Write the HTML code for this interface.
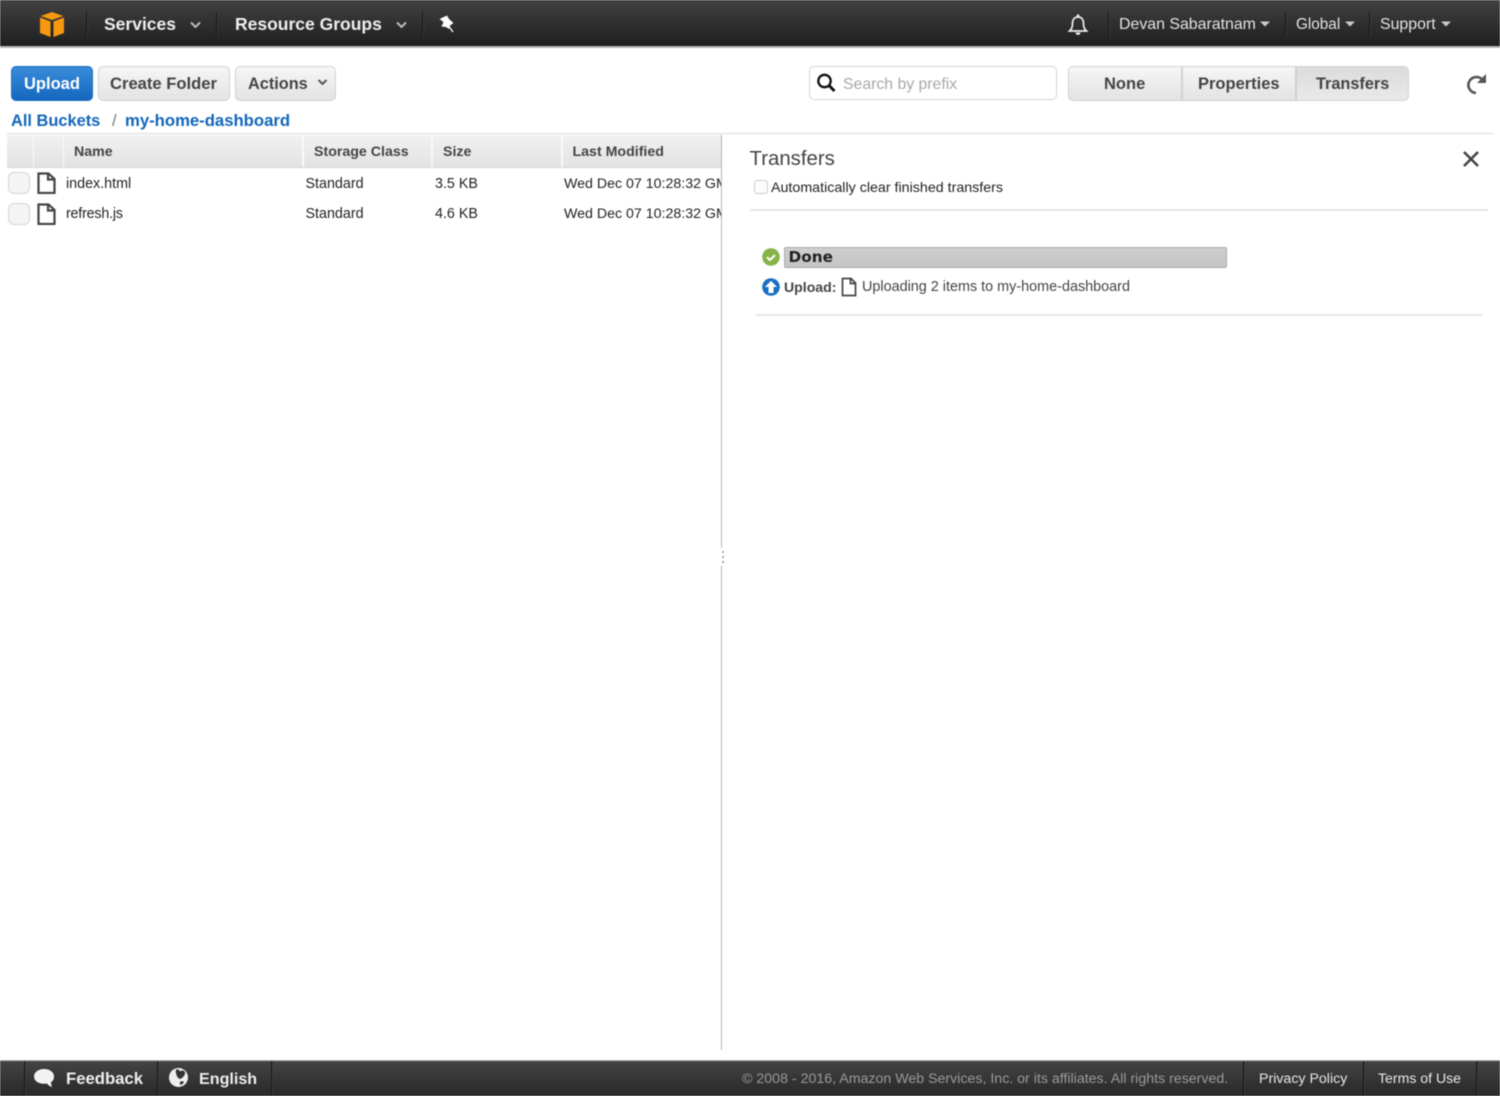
<!DOCTYPE html>
<html lang="en">
<head>
<meta charset="utf-8">
<title>S3 Bucket</title>
<style>
html,body{margin:0;padding:0;background:#fff;width:1500px;height:1096px;overflow:hidden}
#w{position:relative;width:1500px;height:1096px;overflow:hidden;font-family:"Liberation Sans",Arial,sans-serif;filter:blur(.4px)}
#w div,#w span,#w svg{position:absolute}
.t{white-space:nowrap;line-height:20px;height:20px}
.b{font-weight:bold}
.nav{left:-6px;width:1512px;background:linear-gradient(#454545,#1f1f1f)}
.sep{width:1px;background:#161616;border-right:1px solid #3c3c3c}
.btn{box-sizing:border-box;border:1px solid #d2d2d2;border-radius:5px;background:linear-gradient(#f6f6f6,#e3e3e3);height:35px;top:66px}
.c{color:#444;font-size:16.5px;font-weight:bold}
.th{top:135px;height:32px;background:linear-gradient(#f1f1f1,#e3e3e3);border-bottom:1px solid #d8d8d8;box-sizing:content-box}
.hd{color:#444;font-size:14.2px;font-weight:bold;top:142px}
.r{color:#222;font-size:14.3px}
.ck{box-sizing:border-box;left:8px;width:22px;height:22px;background:#f4f4f4;border:1px solid #d4d4d4;border-radius:6px}
.hr{background:#e6e6e6;height:2px}
.nw{color:#eee;font-size:17.5px;font-weight:bold;top:14px}
.nr{color:#e2e2e2;font-size:15.9px;top:15px}
.f{color:#e8e8e8;font-size:14.2px;top:1069px}
</style>
</head>
<body>
<div id="w">
  <!-- Top nav -->
  <div class="nav" style="top:-6px;height:52px"></div>
  <div style="left:-6px;top:46px;width:1512px;height:2px;background:#b5b5b5"></div>
  <svg style="left:38px;top:11px" width="28" height="27" viewBox="0 0 28 27">
    <path fill="#f7980f" d="M14 1l11.500 4-11.500 4L2.500 5zM2 6.500l10.500 4v15.500L2 22zM15.500 10.500l10.500-4V22l-10.500 4z"/>
  </svg>
  <div class="sep" style="left:86px;top:12px;height:24px"></div>
  <span class="t nw" style="left:104px">Services</span>
  <svg style="left:189px;top:20px" width="13" height="10" viewBox="0 0 13 10"><path d="M2 2.500l4.500 4.500 4.500-4.500" fill="none" stroke="#bbb" stroke-width="2"/></svg>
  <div class="sep" style="left:216px;top:12px;height:24px"></div>
  <span class="t nw" style="left:235px">Resource Groups</span>
  <svg style="left:395px;top:20px" width="13" height="10" viewBox="0 0 13 10"><path d="M2 2.500l4.500 4.500 4.500-4.500" fill="none" stroke="#bbb" stroke-width="2"/></svg>
  <div class="sep" style="left:422px;top:12px;height:24px"></div>
  <svg style="left:438px;top:14px" width="18" height="19" viewBox="0 0 18 19">
    <path fill="#fff" d="M1.500 5L9 1.500l2 3.500 4.500 4-3.500 2.500-1 3.500-3-2-4.500-.5L5.500 8z"/>
    <path stroke="#fff" stroke-width="1.300" d="M10.500 12l4.500 6"/>
  </svg>
  <svg style="left:1066px;top:12px" width="24" height="25" viewBox="0 0 24 25">
    <path fill="none" stroke="#eee" stroke-width="1.700" d="M3.500 19c2-2 3-3.500 3-7.500 0-4 2-6.500 5.500-6.500s5.500 2.500 5.500 6.500c0 4 1 5.500 3 7.500z"/>
    <circle cx="12" cy="3.500" r="1.300" fill="#eee"/>
    <path fill="#eee" d="M9.500 20.500h5a2.500 2.500 0 0 1-5 0z"/>
  </svg>
  <div class="sep" style="left:1108px;top:12px;height:24px"></div>
  <span class="t nr" style="left:1119px">Devan Sabaratnam</span>
  <svg style="left:1260px;top:21px" width="10" height="6" viewBox="0 0 10 6"><path fill="#ccc" d="M0 .5h10L5 5.500z"/></svg>
  <div class="sep" style="left:1285px;top:12px;height:24px"></div>
  <span class="t nr" style="left:1296px;font-size:15.3px">Global</span>
  <svg style="left:1345px;top:21px" width="10" height="6" viewBox="0 0 10 6"><path fill="#ccc" d="M0 .5h10L5 5.500z"/></svg>
  <div class="sep" style="left:1369px;top:12px;height:24px"></div>
  <span class="t nr" style="left:1380px">Support</span>
  <svg style="left:1441px;top:21px" width="10" height="6" viewBox="0 0 10 6"><path fill="#ccc" d="M0 .5h10L5 5.500z"/></svg>

  <!-- Toolbar -->
  <div class="btn" style="left:11px;width:82px;background:linear-gradient(#3a8cdb,#1467bd);border-color:#1f6fbe"></div>
  <span class="t b" style="left:24px;top:73.500px;color:#fff;font-size:16.500px">Upload</span>
  <div class="btn" style="left:98px;width:132px"></div>
  <span class="t c" style="left:110px;top:73.500px;font-size:16.600px">Create Folder</span>
  <div class="btn" style="left:235px;width:101px"></div>
  <span class="t c" style="left:248px;top:73.500px;font-size:16.300px">Actions</span>
  <svg style="left:316px;top:78px" width="13" height="9" viewBox="0 0 13 9"><path d="M2.500 2l4 4 4-4" fill="none" stroke="#555" stroke-width="2"/></svg>

  <div style="box-sizing:border-box;left:809px;top:66px;width:248px;height:34px;border:1px solid #d4d4d4;border-radius:5px;background:#fff"></div>
  <svg style="left:815px;top:72px" width="22" height="22" viewBox="0 0 22 22">
    <circle cx="9.500" cy="9" r="6.200" fill="none" stroke="#111" stroke-width="2.300"/>
    <path d="M14 13.500l5.500 5.500" stroke="#111" stroke-width="3"/>
  </svg>
  <span class="t" style="left:843px;top:75px;color:#a8a8a8;font-size:15.800px">Search by prefix</span>

  <div class="btn" style="left:1067.500px;width:341.500px"></div>
  <div style="left:1296px;top:67px;width:112px;height:33px;background:linear-gradient(#dcdcdc,#e9e9e9);border-radius:0 4px 4px 0"></div>
  <div style="left:1181px;top:67px;width:2px;height:33px;background:#d2d2d2"></div>
  <div style="left:1295px;top:67px;width:2px;height:33px;background:#cfcfcf"></div>
  <span class="t c" style="left:1104px;top:73.500px">None</span>
  <span class="t c" style="left:1198px;top:73.500px">Properties</span>
  <span class="t c" style="left:1316px;top:73.500px;font-size:16.300px">Transfers</span>
  <svg style="left:1463px;top:71px" width="26" height="26" viewBox="0 0 26 26">
    <path d="M20 9.500a8 8 0 1 0-7 12.500" fill="none" stroke="#555" stroke-width="2.600"/>
    <path fill="#555" d="M23 3v9h-9z"/>
  </svg>

  <!-- Breadcrumb -->
  <span class="t b" style="left:11px;top:111px;color:#1266bb;font-size:16.400px">All Buckets</span>
  <span class="t" style="left:112px;top:111px;color:#777;font-size:16.500px">/</span>
  <span class="t b" style="left:125px;top:111px;color:#1266bb;font-size:16.700px">my-home-dashboard</span>
  <div style="left:7px;top:133px;width:1487px;height:1px;background:#d9d9d9"></div>

  <!-- Table header -->
  <div class="th" style="left:7px;width:714px"></div>
  <div style="left:33px;top:135px;width:1px;height:32px;background:#fafafa"></div>
  <div style="left:63px;top:135px;width:1px;height:32px;background:#fafafa"></div>
  <div style="left:302px;top:135px;width:2px;height:32px;background:#f9f9f9"></div>
  <div style="left:431px;top:135px;width:2px;height:32px;background:#f9f9f9"></div>
  <div style="left:561px;top:135px;width:2px;height:32px;background:#f9f9f9"></div>
  <span class="t hd" style="left:74px">Name</span>
  <span class="t hd" style="left:314px">Storage Class</span>
  <span class="t hd" style="left:443px">Size</span>
  <span class="t hd" style="left:572.500px">Last Modified</span>

  <!-- Rows -->
  <div class="ck" style="top:172px"></div>
  <svg style="left:37px;top:172px" width="19" height="22" viewBox="0 0 19 22"><path d="M1.500 1.500h10l6 5.500v14h-16zM11 1.500v6h6.500" fill="none" stroke="#444" stroke-width="2.200"/></svg>
  <span class="t r" style="left:66px;top:174px">index.html</span>
  <span class="t r" style="left:305.500px;top:174px">Standard</span>
  <span class="t r" style="left:435px;top:174px">3.5 KB</span>
  <div style="left:564px;top:174px;width:157px;height:20px;overflow:hidden"><span class="t r" style="left:0;top:0;font-size:14.200px">Wed Dec 07 10:28:32 GMT</span></div>

  <div class="ck" style="top:203px"></div>
  <svg style="left:37px;top:203px" width="19" height="22" viewBox="0 0 19 22"><path d="M1.500 1.500h10l6 5.500v14h-16zM11 1.500v6h6.500" fill="none" stroke="#444" stroke-width="2.200"/></svg>
  <span class="t r" style="left:66px;top:204px;letter-spacing:-.2px">refresh.js</span>
  <span class="t r" style="left:305.500px;top:204px">Standard</span>
  <span class="t r" style="left:435px;top:204px">4.6 KB</span>
  <div style="left:564px;top:204px;width:157px;height:20px;overflow:hidden"><span class="t r" style="left:0;top:0;font-size:14.200px">Wed Dec 07 10:28:32 GMT</span></div>

  <!-- Divider -->
  <div style="left:721px;top:135px;width:1px;height:915px;background:#b4b4b4"></div>
  <div style="left:720px;top:548px;width:6px;height:18px;background:#fff"></div>
  <div style="left:722px;top:551px;width:2px;height:2px;background:#aaa"></div>
  <div style="left:722px;top:556px;width:2px;height:2px;background:#aaa"></div>
  <div style="left:722px;top:561px;width:2px;height:2px;background:#aaa"></div>

  <!-- Transfers panel -->
  <span class="t" style="left:749.500px;top:149px;color:#444;font-size:20.400px">Transfers</span>
  <svg style="left:1461px;top:149px" width="20" height="20" viewBox="0 0 20 20"><path d="M3 3l14 14M17 3L3 17" stroke="#444" stroke-width="2.600"/></svg>
  <div style="box-sizing:border-box;left:754px;top:180px;width:14px;height:14px;border:1px solid #ccc;border-radius:3px;background:#fbfbfb"></div>
  <span class="t r" style="left:771px;top:178px;font-size:14.250px">Automatically clear finished transfers</span>
  <div class="hr" style="left:750px;top:209px;width:738px"></div>

  <svg style="left:761px;top:247px" width="20" height="20" viewBox="0 0 20 20">
    <circle cx="10" cy="10" r="8.800" fill="#86b44a"/>
    <path d="M6 10.200l3 2.800 5-5" fill="none" stroke="#fff" stroke-width="2"/>
  </svg>
  <div style="box-sizing:border-box;left:784px;top:247px;width:443px;height:21px;background:linear-gradient(#cfcfcf,#c4c4c4);border:1px solid #aaa;border-radius:2px"></div>
  <span class="t b" style="left:788.500px;top:247px;color:#222;font-size:15.300px;font-family:'DejaVu Sans',sans-serif">Done</span>

  <svg style="left:761px;top:277px" width="20" height="20" viewBox="0 0 20 20">
    <circle cx="10" cy="10" r="8.800" fill="#1a6fc4"/>
    <path fill="#fff" d="M10 3.800l6 6.200h-3.500v6h-5v-6H4z"/>
  </svg>
  <span class="t b" style="left:784px;top:277px;color:#444;font-size:14.100px">Upload:</span>
  <svg style="left:840px;top:277px" width="18" height="20" viewBox="0 0 18 20"><path d="M2.500 1.500h8.500l4.500 4.500v12.500h-13zM10.500 1.500v5h5" fill="none" stroke="#444" stroke-width="1.700"/></svg>
  <span class="t" style="left:862px;top:277px;color:#444;font-size:14.400px">Uploading 2 items to my-home-dashboard</span>
  <div class="hr" style="left:756px;top:314px;width:726px"></div>

  <!-- Footer -->
  <div style="left:-6px;top:1060px;width:1512px;height:1px;background:#b5b5b5"></div>
  <div class="nav" style="top:1061px;height:41px;background:linear-gradient(#444,#232323)"></div>
  <div class="sep" style="left:24px;top:1061px;height:35px"></div>
  <div class="sep" style="left:157px;top:1061px;height:35px"></div>
  <div class="sep" style="left:271px;top:1061px;height:35px"></div>
  <svg style="left:33px;top:1068px" width="23" height="21" viewBox="0 0 23 21">
    <path fill="#f2f2f2" d="M11 1c5.500 0 10 3 10 7.500 0 2.500-1 4.500-3 5.500 0 2 .5 3.500 1 5-2-.5-4-2-5-3.500-1 .2-2 .3-3 .3C5.500 15.800 1 12.800 1 8.500S5.500 1 11 1z"/>
  </svg>
  <span class="t b" style="left:66px;top:1069px;color:#eee;font-size:16.700px">Feedback</span>
  <svg style="left:168px;top:1067px" width="21" height="21" viewBox="0 0 21 21">
    <circle cx="10.500" cy="10.500" r="9.500" fill="#eee"/>
    <path fill="#333" d="M8 2.500c2-.5 3.500.5 4 2 1-1 3-1.500 4.500 0 1 1.500.5 3.500-1 5-1 1-2 2-3.500 2.500-1.500-.5-3-2-3.500-4-.5-2-1-3.500-.5-5.500zM12 15c1-1 3-1 4 0-.5 1.500-2 2.500-3.500 3-.5-1-1-2-.5-3z"/>
  </svg>
  <span class="t b" style="left:199px;top:1069px;color:#eee;font-size:16.100px">English</span>
  <span class="t" style="left:742px;top:1069px;color:#9a9a9a;font-size:14.200px">© 2008 - 2016, Amazon Web Services, Inc. or its affiliates. All rights reserved.</span>
  <div class="sep" style="left:1243px;top:1061px;height:35px"></div>
  <span class="t f" style="left:1259px">Privacy Policy</span>
  <div class="sep" style="left:1363px;top:1061px;height:35px"></div>
  <span class="t f" style="left:1378px;top:1068px;font-size:14.100px">Terms of Use</span>
  <div class="sep" style="left:1476px;top:1061px;height:35px"></div>
</div>
</body>
</html>
